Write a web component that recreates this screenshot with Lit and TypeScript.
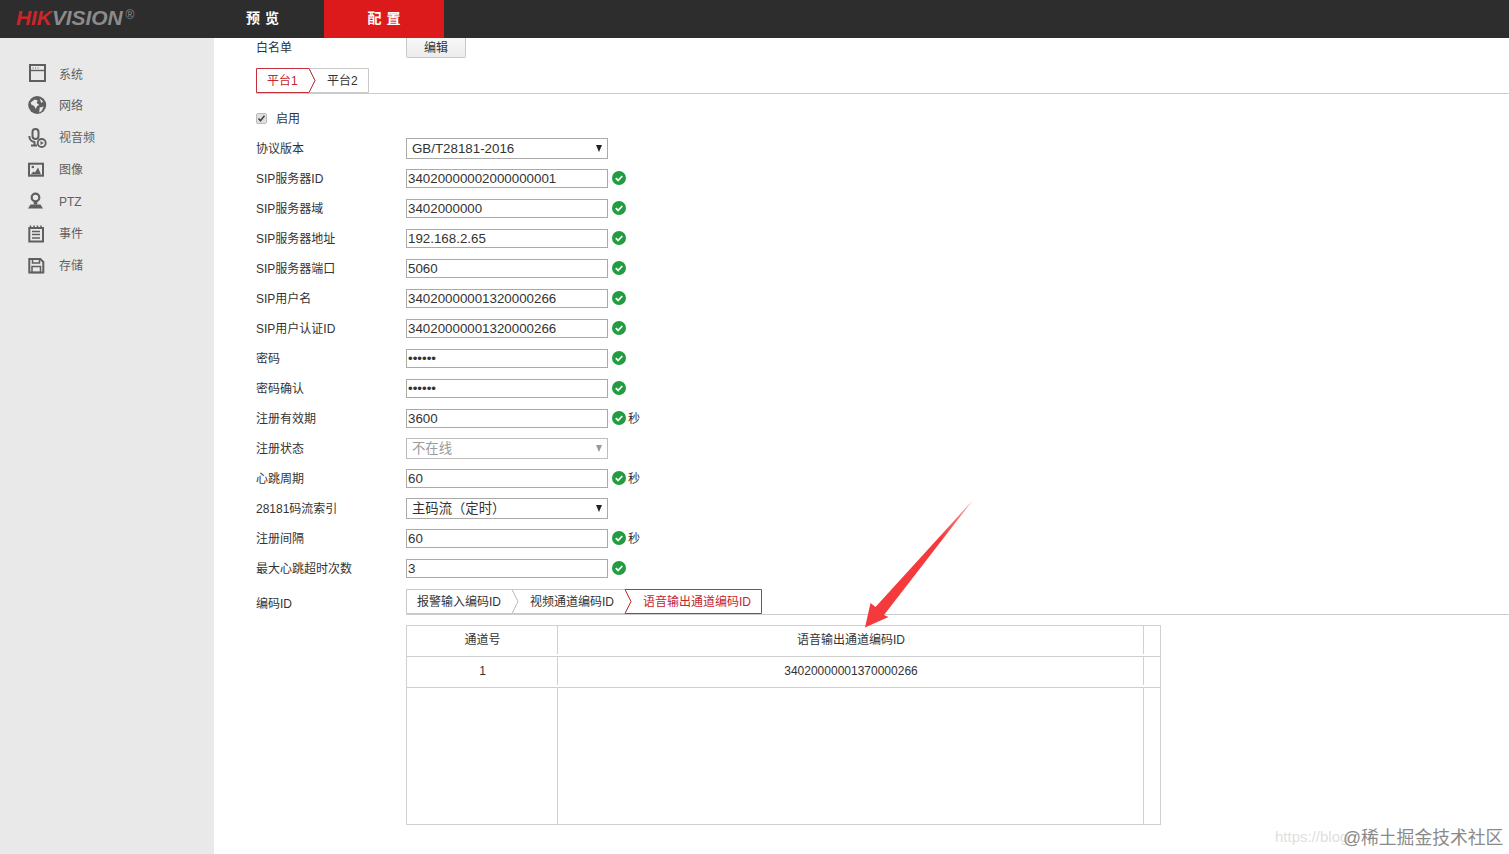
import { LitElement, html, css, svg, nothing } from 'lit';
import { customElement, property } from 'lit/decorators.js';

interface TabItem {
  label: string;
  width: number;
  active?: boolean;
}

// tabs are joined by a chevron, the outline is drawn once over the whole strip
@customElement('chevron-tabs')
export class ChevronTabs extends LitElement {
  static styles = css`
    :host {
      display: block;
      border-bottom: 1px solid #ccc;
    }

    .strip {
      position: relative;
      display: flex;
      height: 25px;
      width: max-content;
    }

    .tab {
      box-sizing: border-box;
      padding-left: 11px;
      line-height: 26px;
      font-size: 12px;
      color: #333;
      white-space: nowrap;
    }

    .tab + .tab {
      padding-left: 12px;
    }

    .tab.active {
      color: #c5252d;
    }

    svg {
      position: absolute;
      left: 0;
      top: 0;
      overflow: visible;
      pointer-events: none;
    }
  `;

  @property({ type: Array })
  items: TabItem[] = [];

  private _outline(total: number) {
    const h = 25;
    let x = 0;
    const shapes = this.items.map((item, i) => {
      const start = x;
      x += item.width;
      const isLast = i === this.items.length - 1;
      const left = i === 0
        ? `M${start + 0.5} 0.5 V${h - 0.5}`
        : `M${start - 6} 0.5 L${start} ${h / 2} L${start - 6} ${h - 0.5}`;
      const right = isLast
        ? `L${x - 0.5} ${h - 0.5} V0.5`
        : `L${x - 6} ${h - 0.5} L${x} ${h / 2} L${x - 6} 0.5`;
      const d = `${left} ${right} Z`;
      return { d, active: !!item.active };
    });
    // active outline goes last so it sits on top of the grey one
    const ordered = [...shapes].sort((a, b) => Number(a.active) - Number(b.active));
    return html`<svg width=${total} height=${h} viewBox="0 0 ${total} ${h}" fill="none">
      ${ordered.map(s => svg`<path d=${s.d} stroke=${s.active ? '#c5303a' : '#c8c8c8'} stroke-width="1"></path>`)}
    </svg>`;
  }

  render() {
    const total = this.items.reduce((sum, t) => sum + t.width, 0);
    return html`
      <div class="strip">
        ${this.items.map(t => html`
          <div class="tab ${t.active ? 'active' : ''}" style="width:${t.width}px">${t.label}</div>
        `)}
        ${this._outline(total)}
      </div>
    `;
  }
}

type FieldKind = 'text' | 'password' | 'select' | 'disabled';

interface Field {
  label: string;
  value: string;
  kind: FieldKind;
  check?: boolean;
  unit?: string;
  cjk?: boolean;
}

const FIELDS: Field[] = [
  { label: '协议版本', value: 'GB/T28181-2016', kind: 'select' },
  { label: 'SIP服务器ID', value: '34020000002000000001', kind: 'text', check: true },
  { label: 'SIP服务器域', value: '3402000000', kind: 'text', check: true },
  { label: 'SIP服务器地址', value: '192.168.2.65', kind: 'text', check: true },
  { label: 'SIP服务器端口', value: '5060', kind: 'text', check: true },
  { label: 'SIP用户名', value: '34020000001320000266', kind: 'text', check: true },
  { label: 'SIP用户认证ID', value: '34020000001320000266', kind: 'text', check: true },
  { label: '密码', value: '••••••', kind: 'password', check: true },
  { label: '密码确认', value: '••••••', kind: 'password', check: true },
  { label: '注册有效期', value: '3600', kind: 'text', check: true, unit: '秒' },
  { label: '注册状态', value: '不在线', kind: 'disabled', cjk: true },
  { label: '心跳周期', value: '60', kind: 'text', check: true, unit: '秒' },
  { label: '28181码流索引', value: '主码流（定时）', kind: 'select', cjk: true },
  { label: '注册间隔', value: '60', kind: 'text', check: true, unit: '秒' },
  { label: '最大心跳超时次数', value: '3', kind: 'text', check: true },
];

const NAV = [
  {
    label: '系统',
    icon: svg`<rect x="3" y="2" width="15" height="16" fill="none" stroke="currentColor" stroke-width="2"></rect>
      <path d="M3 7.500h15" stroke="currentColor" stroke-width="1.400"></path>
      <path d="M5.500 5h1M8 5h1M10.500 5h1" stroke="currentColor" stroke-width="1"></path>`,
  },
  {
    label: '网络',
    icon: svg`<circle cx="10.200" cy="11" r="9" fill="currentColor"></circle>
      <path d="M3.700 8.500 7.700 5.500l3 1-1 2.500 2.500 2-2 1-1.500 3-1.500-3-3-1.500zM12.700 4.500l3.500 3-2 1.500zM12.700 13.500l4-1-2 4.500-2.500 1.500z" fill="#e9e9e9"></path>`,
  },
  {
    label: '视音频',
    icon: svg`<rect x="5.500" y="3" width="6" height="10" rx="3" fill="none" stroke="currentColor" stroke-width="2"></rect>
      <path d="M2.300 10c0 4 3 6 6 6M7.500 16v3M4 19.500h6" fill="none" stroke="currentColor" stroke-width="2"></path>
      <circle cx="14.700" cy="17" r="4" fill="#e9e9e9" stroke="currentColor" stroke-width="1.800"></circle>
      <path d="M13.500 15v4l3.200-2z" fill="currentColor"></path>`,
  },
  {
    label: '图像',
    icon: svg`<rect x="2" y="5.700" width="14" height="12" fill="none" stroke="currentColor" stroke-width="2"></rect>
      <circle cx="5.800" cy="9" r="1.300" fill="currentColor"></circle>
      <path d="M3.500 16.500l3-3 1.500 1 3-5 3 7z" fill="currentColor"></path>`,
  },
  {
    label: 'PTZ',
    icon: svg`<circle cx="8.500" cy="7.500" r="3.800" fill="none" stroke="currentColor" stroke-width="2.200"></circle>
      <path d="M6.700 11.500h3.600v3H6.700z" fill="currentColor"></path>
      <path d="M1 18.500l2.500-4h10l2.500 4z" fill="currentColor"></path>`,
  },
  {
    label: '事件',
    icon: svg`<rect x="2.300" y="6" width="13.700" height="13.500" fill="none" stroke="currentColor" stroke-width="2"></rect>
      <path d="M3.500 3.500v3M7 3.500v3M10.500 3.500v3M14 3.500v3" stroke="currentColor" stroke-width="1.500"></path>
      <path d="M5 9.500h8M5 12.500h8M5 16h8" stroke="currentColor" stroke-width="1.400"></path>`,
  },
  {
    label: '存储',
    icon: svg`<path d="M2.300 5h11l3 3v10.500h-14z" fill="none" stroke="currentColor" stroke-width="2"></path>
      <path d="M5.500 5.500v3.500h7V5.500" fill="none" stroke="currentColor" stroke-width="1.500"></path>
      <path d="M5 12.500h8.500v6H5z" fill="none" stroke="currentColor" stroke-width="1.500"></path>`,
  },
];

@customElement('app-root')
export class AppRoot extends LitElement {
  static styles = css`
    :host {
      display: block;
      position: relative;
      width: 1509px;
      height: 854px;
      overflow: hidden;
      background: #fff;
      font-family: "Liberation Sans", "Noto Sans CJK SC", sans-serif;
      font-size: 12px;
      color: #333;
    }

    .topbar {
      display: flex;
      height: 38px;
      background: #2d2d2d;
    }

    .logo {
      box-sizing: border-box;
      width: 204px;
      padding-left: 16px;
      line-height: 36px;
      font-size: 21px;
      font-weight: bold;
      font-style: italic;
      letter-spacing: -0.1px;
      color: #8b8b8b;
      white-space: nowrap;
    }

    .logo b {
      color: #c9252b;
    }

    .logo sup {
      font-size: 12px;
      font-weight: normal;
      font-style: normal;
      line-height: 0;
      margin-left: 3px;
      vertical-align: 6px;
    }

    .top-tab {
      box-sizing: border-box;
      width: 120px;
      padding-left: 2px;
      text-align: center;
      line-height: 37px;
      font-size: 14px;
      font-weight: bold;
      letter-spacing: 5px;
      color: #fff;
    }

    .top-tab.active {
      padding-left: 5px;
      background: #dc1a1c;
    }

    .body {
      display: flex;
      height: 816px;
    }

    .side {
      box-sizing: border-box;
      width: 214px;
      flex: none;
      padding: 20px 0 0 27px;
      background: #e9e9e9;
    }

    .nav-item {
      display: flex;
      align-items: center;
      gap: 12px;
      height: 32px;
      line-height: 14px;
      color: #5f5f5f;
    }

    .nav-item:first-child {
      margin-bottom: -1px;
    }

    .nav-item span {
      margin-top: 2px;
    }

    .nav-item svg {
      width: 20px;
      height: 20px;
      flex: none;
      margin-top: -2px;
      overflow: visible;
    }

    .main {
      flex: 1;
      min-width: 0;
      padding-left: 42px;
    }

    .whitelist {
      display: flex;
      height: 19px;
      align-items: center;
    }

    .label {
      width: 150px;
      flex: none;
      margin-top: -2px;
      white-space: nowrap;
    }

    .edit-btn {
      box-sizing: border-box;
      width: 60px;
      height: 20px;
      line-height: 21px;
      text-align: center;
      background: linear-gradient(#f7f7f7, #ececec);
      border: 1px solid #c8c8c8;
      border-top: none;
      border-radius: 0 0 2px 2px;
    }

    .platform-tabs {
      margin-top: 11px;
    }

    .enable {
      display: flex;
      align-items: center;
      gap: 9px;
      height: 30px;
      margin-top: 9px;
    }

    .enable span:last-child {
      margin-top: -2px;
    }

    .checkbox {
      box-sizing: border-box;
      width: 11px;
      height: 11px;
      border: 1px solid #bbb;
      border-radius: 2px;
      background: #e0e0e0;
    }

    .checkbox svg {
      display: block;
    }

    .row {
      display: flex;
      align-items: center;
      height: 30px;
    }

    .control {
      box-sizing: border-box;
      width: 202px;
      flex: none;
      margin-top: 1px;
      border: 1px solid #aaa;
      font: inherit;
      font-size: 13.33px;
      color: #333;
      background: #fff;
    }

    input.control {
      height: 19px;
      padding: 0 1px;
      outline: none;
    }

    .select {
      display: flex;
      align-items: center;
      justify-content: space-between;
      height: 21px;
      padding: 0 5px;
    }

    .select.cjk span:first-child {
      margin-top: -2px;
    }

    .select.off {
      color: #9a9a9a;
      border-color: #bdbdbd;
    }

    .caret {
      width: 0;
      height: 0;
      border-left: 3.5px solid transparent;
      border-right: 3.5px solid transparent;
      border-top: 7px solid #222;
    }

    .select.off .caret {
      border-top-color: #999;
    }

    .ok {
      width: 14px;
      height: 14px;
      margin-left: 4px;
      flex: none;
    }

    .unit {
      margin-left: 2px;
      margin-top: -2px;
    }

    .code-row {
      display: flex;
      padding-top: 6px;
    }

    .code-row .label {
      margin-top: 0;
      padding-top: 5px;
    }

    .code-col {
      flex: 1;
      min-width: 0;
    }

    .grid {
      box-sizing: border-box;
      width: 755px;
      height: 200px;
      margin-top: 10px;
      border: 1px solid #d0d0d0;
      display: grid;
      grid-template-columns: 151px 586px 1fr;
      grid-template-rows: 31px 31px 1fr;
    }

    .cell {
      display: flex;
      align-items: center;
      justify-content: center;
      padding-bottom: 2px;
      border-bottom: 1px solid #d0d0d0;
      position: relative;
    }

    .cell.head {
      padding-bottom: 5px;
    }

    .cell.sep::after {
      content: "";
      position: absolute;
      right: 0;
      top: 0;
      bottom: 2px;
      width: 1px;
      background: #d0d0d0;
    }

    .cell.fill {
      border-bottom: none;
    }

    .cell.fill::after {
      bottom: 0;
    }

    .arrow {
      position: absolute;
      left: 860px;
      top: 495px;
    }

    .watermark {
      position: absolute;
      left: 1275px;
      top: 825px;
      width: 234px;
      height: 24px;
      line-height: 24px;
      white-space: nowrap;
    }

    .watermark .url {
      font-size: 15px;
      color: #e0e0e0;
    }

    .watermark .brand {
      position: absolute;
      left: 68px;
      top: 1px;
      font-size: 17.8px;
      color: #8a8a8a;
    }
  `;

  private _check() {
    return html`<svg class="ok" viewBox="0 0 14 14">
      <circle cx="7" cy="7" r="7" fill="#1f9d3f"></circle>
      <path d="M3.800 7.200 6.100 9.500 10.300 5" fill="none" stroke="#fff" stroke-width="1.800"></path>
    </svg>`;
  }

  private _control(f: Field) {
    if (f.kind === 'select' || f.kind === 'disabled') {
      return html`<div class="control select ${f.kind === 'disabled' ? 'off' : ''} ${f.cjk ? 'cjk' : ''}">
        <span>${f.value}</span><span class="caret"></span>
      </div>`;
    }
    return html`<input class="control" type=${f.kind} .value=${f.value} />`;
  }

  private _field(f: Field) {
    return html`
      <div class="row">
        <div class="label">${f.label}</div>
        ${this._control(f)}
        ${f.check ? this._check() : nothing}
        ${f.unit ? html`<span class="unit">${f.unit}</span>` : nothing}
      </div>
    `;
  }

  render() {
    return html`
      <div class="topbar">
        <div class="logo"><b>HIK</b>VISION<sup>®</sup></div>
        <div class="top-tab">预览</div>
        <div class="top-tab active">配置</div>
      </div>
      <div class="body">
        <div class="side">
          ${NAV.map(n => html`
            <div class="nav-item">
              <svg viewBox="0 0 20 20">${n.icon}</svg>
              <span>${n.label}</span>
            </div>
          `)}
        </div>
        <div class="main">
          <div class="whitelist">
            <div class="label">白名单</div>
            <div class="edit-btn">编辑</div>
          </div>
          <chevron-tabs class="platform-tabs" .items=${[
            { label: '平台1', width: 59, active: true },
            { label: '平台2', width: 54 },
          ]}></chevron-tabs>
          <div class="enable">
            <span class="checkbox">
              <svg width="9" height="9" viewBox="0 0 9 9">
                <path d="M1.500 4.500 3.500 6.800 7.500 1.800" fill="none" stroke="#444" stroke-width="1.600"></path>
              </svg>
            </span>
            <span>启用</span>
          </div>
          ${FIELDS.map(f => this._field(f))}
          <div class="code-row">
            <div class="label">编码ID</div>
            <div class="code-col">
              <chevron-tabs .items=${[
                { label: '报警输入编码ID', width: 112 },
                { label: '视频通道编码ID', width: 113 },
                { label: '语音输出通道编码ID', width: 131, active: true },
              ]}></chevron-tabs>
              <div class="grid">
                <div class="cell head sep">通道号</div>
                <div class="cell head sep">语音输出通道编码ID</div>
                <div class="cell"></div>
                <div class="cell sep">1</div>
                <div class="cell sep">34020000001370000266</div>
                <div class="cell"></div>
                <div class="cell sep fill"></div>
                <div class="cell sep fill"></div>
                <div class="cell fill"></div>
              </div>
            </div>
          </div>
        </div>
      </div>
      <svg class="arrow" width="120" height="140" viewBox="860 495 120 140">
        <defs>
          <linearGradient id="fade" x1="0" y1="1" x2="1" y2="0">
            <stop offset="0.7" stop-color="#f43a3c"></stop>
            <stop offset="1" stop-color="#f9a0a0"></stop>
          </linearGradient>
        </defs>
        <polygon points="973,500 884,615 888.500,617 865,627.500 870.500,603 875.500,607" fill="url(#fade)"></polygon>
      </svg>
      <div class="watermark">
        <span class="url">https://blog</span>
        <span class="brand">@稀土掘金技术社区</span>
      </div>
    `;
  }
}
